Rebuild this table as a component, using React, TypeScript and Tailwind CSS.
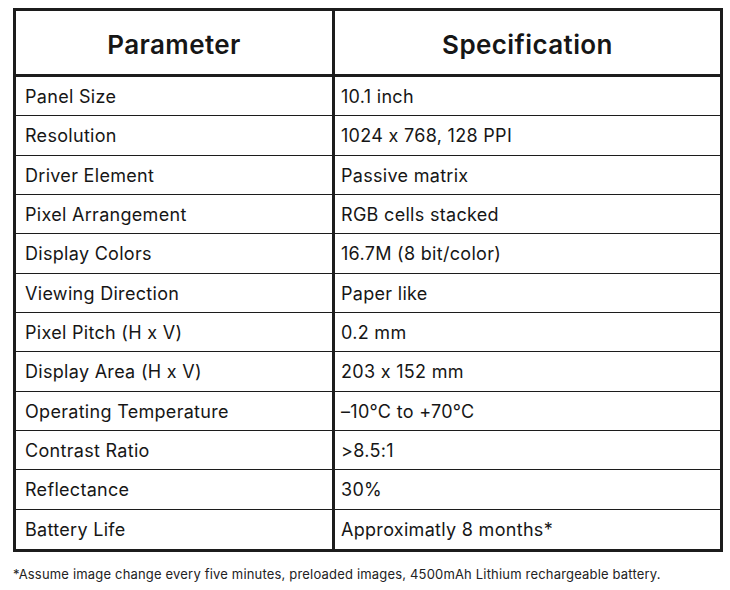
const rows: [string, string][] = [
  ["Panel Size", "10.1 inch"],
  ["Resolution", "1024 x 768, 128 PPI"],
  ["Driver Element", "Passive matrix"],
  ["Pixel Arrangement", "RGB cells stacked"],
  ["Display Colors", "16.7M (8 bit/color)"],
  ["Viewing Direction", "Paper like"],
  ["Pixel Pitch (H x V)", "0.2 mm"],
  ["Display Area (H x V)", "203 x 152 mm"],
  ["Operating Temperature", "–10°C to +70°C"],
  ["Contrast Ratio", ">8.5:1"],
  ["Reflectance", "30%"],
  ["Battery Life", "Approximatly 8 months*"],
];

function Row({ label, value, last }: { label: string; value: string; last: boolean }) {
  return (
    <div
      className={`grid grid-cols-[319px_1fr] h-[39.33px] ${
        last ? "" : "border-b-[1.5px] border-[#1c1c1c]"
      }`}
    >
      <div className="flex items-center pl-[9px] pt-[1px] border-r-[3px] border-[#1c1c1c]">
        {label}
      </div>
      <div className="flex items-center pl-[6px] pt-[1px]">{value}</div>
    </div>
  );
}

export default function App() {
  return (
    <div
      className="w-[730px] h-[590px] bg-white text-[#161616] pt-[8px] pl-[13px] [font-feature-settings:'calt'_0]"
      style={{ fontFamily: "Inter, 'Noto Sans', sans-serif" }}
    >
      <div className="w-[710px] border-[3px] border-[#1c1c1c] text-[18px] tracking-[0.3px]">
        <div className="grid grid-cols-[319px_1fr] h-[66px] border-b-[3px] border-[#1c1c1c] text-[26px] font-semibold tracking-[0.4px]">
          <div className="flex items-center justify-center pt-[4px] border-r-[3px] border-[#1c1c1c]">
            Parameter
          </div>
          <div className="flex items-center justify-center pt-[4px]">Specification</div>
        </div>
        {rows.map(([l, v], i) => (
          <Row key={l} label={l} value={v} last={i === rows.length - 1} />
        ))}
      </div>
      <p className="mt-[13px] text-[13px] tracking-[0.18px] text-[#222]">
        *Assume image change every five minutes, preloaded images, 4500mAh Lithium rechargeable battery.
      </p>
    </div>
  );
}
